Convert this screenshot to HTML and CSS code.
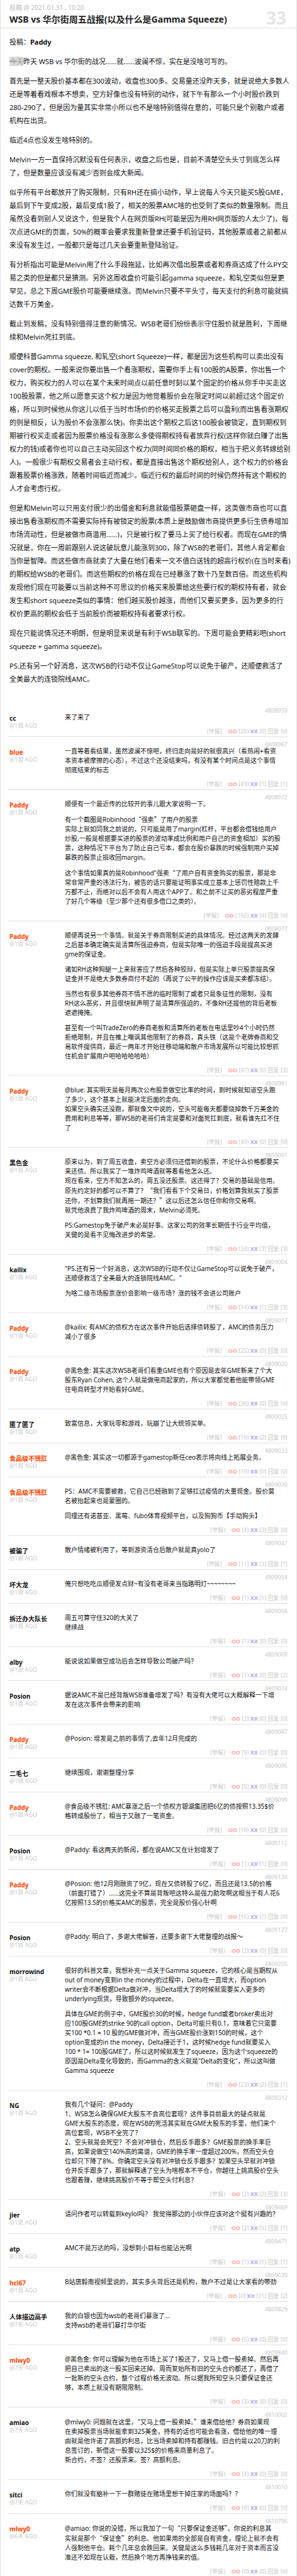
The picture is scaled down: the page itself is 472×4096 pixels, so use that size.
FILE: index.html
```html
<!DOCTYPE html>
<html lang="zh-CN">
<head>
<meta charset="utf-8">
<meta name="viewport" content="width=device-width, initial-scale=1">
<title>WSB vs 华尔街周五战报(以及什么是Gamma Squeeze)</title>
<link rel="stylesheet" href="styles.css">
</head>
<body>
<main class="page">
<header class="post-head">
<div>
<div class="post-meta">投稿 @ 2021.01.31 , 10:20</div>
<h1 class="post-title">WSB vs 华尔街周五战报(以及什么是Gamma Squeeze)</h1>
</div>
<a class="post-count" href="#comments">33</a>
</header>

<article class="post">
<p>投稿：<strong>Paddy</strong></p>
<p><del>今天</del>昨天 WSB vs 华尔街的战况……就……波澜不惊，实在是没啥可写的。</p>
<p>首先是一整天股价基本都在300波动，收盘也300多。交易量还没昨天多，就是说绝大多数人
还是等着看戏根本不想卖，空方好像也没有特别的动作，就下午有那么一个小时股价跌到
280-290了，但是因为量其实非常小所以也不是啥特别值得在意的，可能只是个别散户或者
机构在出货。</p>
<p>临近4点也没发生啥特别的。</p>
<p>Melvin一方一直保持沉默没有任何表示，收盘之后也是，目前不清楚空头头寸到底怎么样
了，但是数量应该没有减少否则会成大新闻。</p>
<p>似乎所有平台都放开了购买限制，只有RH还在搞小动作，早上说每人今天只能买5股GME，
最后到下午变成2股，最后变成1股了，相关的股票AMC啥的也受到了类似的数量限制。而且
虽然没看到别人又说这个，但是我个人在网页版RH(可能是因为用RH网页版的人太少了)，每
次点进GME的页面，50%的概率会要求我重新登录还要手机验证码，其他股票或者之前都从
来没有发生过，一般都只是每过几天会要重新登陆验证。</p>
<p>有分析指出可能是Melvin用了什么手段拖延，比如再次借出股票或者和券商达成了什么PY交
易之类的但是都只是猜测。另外这周收盘价可能引起gamma squeeze，和轧空类似但是更
罕见，总之下周GME股价可能要继续涨。而Melvin只要不平头寸，每天支付的利息可能就搞
达数千万美金。</p>
<p>截止到发稿，没有特别值得注意的新情况。WSB老哥们纷纷表示守住股价就是胜利，下周继
续和Melvin死扛到底。</p>
<p>顺便科普Gamma squeeze, 和轧空(short Squeeze)一样，都是因为这些机构可以卖出没有
cover的期权。一般来说你要出售一个看涨期权，需要你手上有100股的A股票，你出售一个
权力，购买权力的人可以在某个未来时间点以前任意时刻以某个固定的价格从你手中买走这
100股股票，他之所以愿意买这个权力是因为他觉着股价会在限定时间以前超过这个固定价
格，所以到时候他从你这儿以低于当时市场价的价格买走股票之后可以盈利(而出售看涨期权
的则是相反，认为股价不会涨那么快)。你卖出这个期权之后这100股会被锁定，直到期权到
期被行权买走或者因为股票价格没有涨那么多使得期权持有者放弃行权(这样你就白赚了出售
权力的钱)或者你也可以自己主动买回这个权力(同时间同价格的期权，相当于把义务转嫁给别
人)。一般很少有期权交易者会主动行权，都是直接出售这个期权给别人，这个权力的价格会
跟着股票价格涨跌，随着时间临近而减少。临近行权的最后时间的时候仍然持有这个期权的
人才会考虑行权。</p>
<p>但是和Melvin可以只用支付很少的出借金和利息就能借股票砸盘一样，这类做市商也可以直
接出售看涨期权而不需要实际持有被锁定的股票(本质上是鼓励做市商提供更多衍生债券增加
市场流动性，但是被做市商滥用……)，只是被行权了要马上买了给行权者。而现在GME的情
况就是，你在一周前跟别人说这破玩意儿能涨到300，除了WSB的老哥们，其他人肯定都会
当你是智障。而这些做市商就卖了大量在他们看来一文不值白送钱的超高行权价(在当时来看)
的期权给WSB的老哥们。而这些期权的价格在现在已经暴涨了数十乃至数百倍。而这些机构
发现他们现在可能要以当前这种不可思议的价格买来股票给这些要行权的期权持有者，就会
发生和short squeeze类似的事情：他们越买股价越涨，而他们又要买更多，因为更多的行
权价更高的期权会低于当前股价而被期权持有者要求行权。</p>
<p>现在只能说情况还不明朗，但是明显来说是有利于WSB联军的。下周可能会更精彩吧(short
squeeze + gamma squeeze)。</p>
<p>PS.还有另一个好消息，这次WSB的行动不仅让GameStop可以说免于破产，还顺便救活了
全美最大的连锁院线AMC。</p>
</article>

<section class="comments" id="comments">
<article class="comment">
<div class="author"><b class="name">cc</b><span class="ago">@1周 AGO</span></div>
<a class="cid" href="#">4808959</a>
<div class="text"><p>来了来了</p></div>
<div class="acts"><a class="report" href="#">[举报]</a><a class="oo" href="#">OO</a> [28] <a class="xx" href="#">XX</a> [0] <a href="#">回复</a> [0]</div>
</article>

<article class="comment">
<div class="author"><b class="name red">blue</b><span class="ago">@1周 AGO</span></div>
<a class="cid" href="#">4808967</a>
<div class="text"><p>一直等着看结果，虽然波澜不惊吧，终归走向是好的就很高兴（看热闹+看资
本资本被摩擦的心态），不过这个还没结束吗，有没有某个时间点是这个事情
彻底结束的标志</p></div>
<div class="acts"><a class="report" href="#">[举报]</a><a class="oo" href="#">OO</a> [43] <a class="xx" href="#">XX</a> [1] <a href="#">回复</a> [1]</div>
</article>

<article class="comment">
<div class="author"><b class="name red">Paddy</b><span class="ago">@1周 AGO</span></div>
<a class="cid" href="#">4808972</a>
<div class="text"><p>顺便有一个最近传的比较开的事儿跟大家说明一下。</p>
<p>有一个截图是Robinhood<span class="q">“</span>强卖<span class="q">”</span>了用户的股票
实际上就如同我之前说的，只可能是用了margin(杠杆，平台都会借钱给用户
炒股,一般是根据要买进的股票的波动率成比例和用户自己的资金相加）买的股
票，这种情况下平台为了防止自己亏本，都会在股价暴跌的时候强制用户买掉
暴跌的股票止损收回margin。</p>
<p>这个事情如果真的是Robinhood"强卖<span class="q">“</span>了用户自有资金购买的股票，那是非
常非常严重的违法行为，被告的话只要能证明事实成立基本上惩罚性赔款上千
万都不止，而绝对以后不会有人用这个APP了。和之前不让买的恶劣程度严重
了好几个等级（至少那个还有很多借口之类的）。</p></div>
<div class="acts"><a class="report" href="#">[举报]</a><a class="oo" href="#">OO</a> [192] <a class="xx" href="#">XX</a> [4] <a href="#">回复</a> [0]</div>
</article>

<article class="comment">
<div class="author"><b class="name red">Paddy</b><span class="ago">@1周 AGO</span></div>
<a class="cid" href="#">4808977</a>
<div class="text"><p>顺便再说另一个事情。就是关于券商限制买进的具体情况。经过这两天的发酵
之后基本确定确实是清算所强迫券商，但是实际唯一的强迫手段是提高买进
gme的保证金。</p>
<p>诸如RH这种狗腿一上来就答应了然后各种狡辩，但是实际上单只股票提高保
证金并不是绝大多数券商付不起的（再说了公平的操作应该是买卖都冻结）。</p>
<p>当然也有很多其他券商不情不愿的临时限制了或者只是象征性的限制，没有
RH这么恶劣，并且很快就声明了是清算所强迫的，不像RH还提他的背后老板
遮遮掩掩。</p>
<p>甚至有一个叫TradeZero的券商老板和清算所的老板在电话里吵4个小时仍然
拒绝限制，并且在推上嘲讽其他限制了的券商，真头铁（这是个老牌券商和交
易软件提供商，最近一两年才开始往移动端和散户市场发展所以可能比较想抓
住机会扩展用户吧哈哈哈哈哈）</p></div>
<div class="acts"><a class="report" href="#">[举报]</a><a class="oo" href="#">OO</a> [97] <a class="xx" href="#">XX</a> [0] <a href="#">回复</a> [3]</div>
</article>

<article class="comment">
<div class="author"><b class="name red">Paddy</b><span class="ago">@1周 AGO</span></div>
<a class="cid" href="#">4808981</a>
<div class="text"><p>@blue: 其实明天是每月两次公布股票做空比率的时间，到时候就知道空头跑
了多少，这个基本上就能决定后面的走向。
如果空头确实还没跑，那就像文中说的，空头可能每天都要烧掉数千万美金的
费用和利息等等，那WSB的老哥们肯定是要和对面死扛到底，就看谁先扛不住
了</p></div>
<div class="acts"><a class="report" href="#">[举报]</a><a class="oo" href="#">OO</a> [49] <a class="xx" href="#">XX</a> [0] <a href="#">回复</a> [0]</div>
</article>

<article class="comment">
<div class="author"><b class="name">黑色金</b><span class="ago">@1周 AGO</span></div>
<a class="cid" href="#">4809001</a>
<div class="text"><p>原来以为，到了周五收盘，卖空方必须归还借到的股票，不论什么价格都要买
来还债。所以我买了一堆炸鸡啤酒就等着看他怎么还。
现在看来，空方不知怎么的，周五没还股票。这还得了？交易的基础是信用。
原先约定好的都可以不算了？<span class="q">“</span>我们看看下个交易日，价格划算我就买了股票
还你，不划算我们就再拖一期还？<span class="q">”</span>这以后还怎么信任你和你交易啊。
就凭他浪费了我炸鸡啤酒的周末，Melvin必须死。</p>
<p>PS:Gamestop免于破产未必是好事。这家公司的效率长期低于行业平均值，
关键的是看不见悔改进步的希望。</p></div>
<div class="acts"><a class="report" href="#">[举报]</a><a class="oo" href="#">OO</a> [34] <a class="xx" href="#">XX</a> [3] <a href="#">回复</a> [3]</div>
</article>

<article class="comment">
<div class="author"><b class="name">kailix</b><span class="ago">@1周 AGO</span></div>
<a class="cid" href="#">4809004</a>
<div class="text"><p>"PS.还有另一个好消息，这次WSB的行动不仅让GameStop可以说免于破产，
还顺便救活了全美最大的连锁院线AMC。"</p>
<p>为啥二级市场股票涨价会影响一级市场？涨的钱不会进公司账户</p></div>
<div class="acts"><a class="report" href="#">[举报]</a><a class="oo" href="#">OO</a> [14] <a class="xx" href="#">XX</a> [1] <a href="#">回复</a> [3]</div>
</article>

<article class="comment">
<div class="author"><b class="name red">Paddy</b><span class="ago">@1周 AGO</span></div>
<a class="cid" href="#">4809017</a>
<div class="text"><p>@kailix: 有AMC的债权方在这次事件开始后选择债转股了，AMC的债务压力
减小了很多</p></div>
<div class="acts"><a class="report" href="#">[举报]</a><a class="oo" href="#">OO</a> [25] <a class="xx" href="#">XX</a> [0] <a href="#">回复</a> [0]</div>
</article>

<article class="comment">
<div class="author"><b class="name red">Paddy</b><span class="ago">@1周 AGO</span></div>
<a class="cid" href="#">4809020</a>
<div class="text"><p>@黑色金: 其实这次WSB老哥们看重GME也有个原因是去年GME新来了个大
股东Ryan Cohen, 这个人就是做电商起家的，所以大家都觉着他能带领GME
往电商转型才开始看好GME。</p></div>
<div class="acts"><a class="report" href="#">[举报]</a><a class="oo" href="#">OO</a> [30] <a class="xx" href="#">XX</a> [0] <a href="#">回复</a> [0]</div>
</article>

<article class="comment">
<div class="author"><b class="name">匿了匿了</b><span class="ago">@1周 AGO</span></div>
<a class="cid" href="#">4809025</a>
<div class="text"><p>致富信息，大家玩零和游戏，玩崩了让大统领买单。</p></div>
<div class="acts"><a class="report" href="#">[举报]</a><a class="oo" href="#">OO</a> [19] <a class="xx" href="#">XX</a> [2] <a href="#">回复</a> [0]</div>
</article>

<article class="comment">
<div class="author"><b class="name red">食品级不锈肛</b><span class="ago">@1周 AGO</span></div>
<a class="cid" href="#">4809033</a>
<div class="text"><p>@黑色金: 其实这一切都源于gamestop新任ceo表示将向线上拓展业务。</p></div>
<div class="acts"><a class="report" href="#">[举报]</a><a class="oo" href="#">OO</a> [19] <a class="xx" href="#">XX</a> [0] <a href="#">回复</a> [0]</div>
</article>

<article class="comment">
<div class="author"><b class="name red">食品级不锈肛</b><span class="ago">@1周 AGO</span></div>
<a class="cid" href="#">4809039</a>
<div class="text"><p>PS：AMC不需要被救，它自己已经融到了足够扛过疫情的大量现金。股价莫
名被抬起来也是蒙圈的。</p>
<p>同理还有诺基亚、黑莓、fubo体育视频平台，以及狗狗币【手动狗头】</p></div>
<div class="acts"><a class="report" href="#">[举报]</a><a class="oo" href="#">OO</a> [4] <a class="xx" href="#">XX</a> [3] <a href="#">回复</a> [0]</div>
</article>

<article class="comment">
<div class="author"><b class="name">被骗了</b><span class="ago">@1周 AGO</span></div>
<a class="cid" href="#">4809047</a>
<div class="text"><p>散户情绪被利用了，等到游资清仓后散户就是真yolo了</p></div>
<div class="acts"><a class="report" href="#">[举报]</a><a class="oo" href="#">OO</a> [11] <a class="xx" href="#">XX</a> [3] <a href="#">回复</a> [1]</div>
</article>

<article class="comment">
<div class="author"><b class="name">坏大龙</b><span class="ago">@1周 AGO</span></div>
<a class="cid" href="#">4809054</a>
<div class="text"><p>俺只想吃吃瓜顺便发点财~有没有老哥来当指路明灯~~~~~~~~</p></div>
<div class="acts"><a class="report" href="#">[举报]</a><a class="oo" href="#">OO</a> [1] <a class="xx" href="#">XX</a> [1] <a href="#">回复</a> [0]</div>
</article>

<article class="comment">
<div class="author"><b class="name">拆迁办大队长</b><span class="ago">@1周 AGO</span></div>
<a class="cid" href="#">4809066</a>
<div class="text"><p>周五可算守住320的大关了
继续战</p></div>
<div class="acts"><a class="report" href="#">[举报]</a><a class="oo" href="#">OO</a> [1] <a class="xx" href="#">XX</a> [0] <a href="#">回复</a> [0]</div>
</article>

<article class="comment">
<div class="author"><b class="name">alby</b><span class="ago">@1周 AGO</span></div>
<a class="cid" href="#">4809069</a>
<div class="text"><p>能说说如果做空成功后会怎样导致公司破产吗？</p></div>
<div class="acts"><a class="report" href="#">[举报]</a><a class="oo" href="#">OO</a> [1] <a class="xx" href="#">XX</a> [0] <a href="#">回复</a> [2]</div>
</article>

<article class="comment">
<div class="author"><b class="name">Posion</b><span class="ago">@1周 AGO</span></div>
<a class="cid" href="#">4809074</a>
<div class="text"><p>据说AMC不是已经背叛WSB准备增发了吗？有没有大佬可以大概解释一下增
发在这次事件会带来的影响</p></div>
<div class="acts"><a class="report" href="#">[举报]</a><a class="oo" href="#">OO</a> [2] <a class="xx" href="#">XX</a> [0] <a href="#">回复</a> [0]</div>
</article>

<article class="comment">
<div class="author"><b class="name red">Paddy</b><span class="ago">@1周 AGO</span></div>
<a class="cid" href="#">4809087</a>
<div class="text"><p>@Posion: 增发是之前的事情了,去年12月完成的</p></div>
<div class="acts"><a class="report" href="#">[举报]</a><a class="oo" href="#">OO</a> [9] <a class="xx" href="#">XX</a> [0] <a href="#">回复</a> [0]</div>
</article>

<article class="comment">
<div class="author"><b class="name">二毛七</b><span class="ago">@1周 AGO</span></div>
<a class="cid" href="#">4809096</a>
<div class="text"><p>继续围观，谢谢整理分享</p></div>
<div class="acts"><a class="report" href="#">[举报]</a><a class="oo" href="#">OO</a> [5] <a class="xx" href="#">XX</a> [0] <a href="#">回复</a> [0]</div>
</article>

<article class="comment">
<div class="author"><b class="name red">Paddy</b><span class="ago">@1周 AGO</span></div>
<a class="cid" href="#">4809099</a>
<div class="text"><p>@食品级不锈肛: AMC暴涨之后一个债权方银湖集团把6亿的债按照13.35$价
格转成股份了，相当于又融了一笔资金。</p></div>
<div class="acts"><a class="report" href="#">[举报]</a><a class="oo" href="#">OO</a> [19] <a class="xx" href="#">XX</a> [0] <a href="#">回复</a> [0]</div>
</article>

<article class="comment">
<div class="author"><b class="name">Posion</b><span class="ago">@1周 AGO</span></div>
<a class="cid" href="#">4809112</a>
<div class="text"><p>@Paddy: 看这两天的新闻，都在说AMC又在计划增发了</p></div>
<div class="acts"><a class="report" href="#">[举报]</a><a class="oo" href="#">OO</a> [1] <a class="xx" href="#">XX</a> [1] <a href="#">回复</a> [0]</div>
</article>

<article class="comment">
<div class="author"><b class="name red">Paddy</b><span class="ago">@1周 AGO</span></div>
<a class="cid" href="#">4809134</a>
<div class="text"><p>@Posion: 他12月刚融资了9亿，现在又债转股了6亿，而且还是13.5的价格
（前面打错了）……这完全不算是背叛吧这特么是强力助攻啊这相当于有人花6
亿按照13.5的价格买AMC的股票，完全是股价强心针啊</p></div>
<div class="acts"><a class="report" href="#">[举报]</a><a class="oo" href="#">OO</a> [15] <a class="xx" href="#">XX</a> [1] <a href="#">回复</a> [0]</div>
</article>

<article class="comment">
<div class="author"><b class="name">Posion</b><span class="ago">@1周 AGO</span></div>
<a class="cid" href="#">4809177</a>
<div class="text"><p>@Paddy: 明白了，多谢大佬解答，还要多谢下大佬整理的战报～</p></div>
<div class="acts"><a class="report" href="#">[举报]</a><a class="oo" href="#">OO</a> [3] <a class="xx" href="#">XX</a> [0] <a href="#">回复</a> [0]</div>
</article>

<article class="comment">
<div class="author"><b class="name">morrowind</b><span class="ago">@1周 AGO</span></div>
<a class="cid" href="#">4809205</a>
<div class="text"><p>很好的科普文章，我想补充一点关于Gamma squeeze，它的核心是当期权从
out of money变到in the money的过程中，Delta在一直增大，而option
writer会不断根据Delta做对冲，当Delta增大了的时候就需要买入更多的
underlying现货，导致额外的squeeze。</p>
<p>具体在GME的例子中，GME股价30的时候，hedge fund或者broker卖出对
应100股GME的strike 90的call option，Delta可能只有0.1，意味着它只需要
买100 *0.1 = 10 股的GME做对冲，而当GME股价涨到150的时候，这个
option变成的in the money，Delta接近于1，这时候hedge fund就要买入
100 * 1= 100股GME了，所以这时候就发生了squeeze，因为这个squeeze的
原因是Delta变化导致的，而Gamma的含义就是"Delta的变化"，所以这叫做
Gamma squeeze</p></div>
<div class="acts"><a class="report" href="#">[举报]</a><a class="oo" href="#">OO</a> [23] <a class="xx" href="#">XX</a> [2] <a href="#">回复</a> [1]</div>
</article>

<article class="comment">
<div class="author"><b class="name">NG</b><span class="ago">@1周 AGO</span></div>
<a class="cid" href="#">4809312</a>
<div class="text"><p>我有几个疑问：@Paddy
1、WSB怎么确保GME大股东不会高位套现？这件事目前最大的疑点就是
GME大股东的态度，现在WSB的死活其实就在GME大股东的手里，他们来个
高位套现，WSB不全完了？
2、空头就是会死空？不会对冲锁仓，然后反手跟多？GME股票的换手率巨
高，如果说做空140%高的离谱，GME的换手率一度超过200%，然而空头仓
位却只下降了8%。你确定空头没有对冲锁仓反手跟多？如果空头早就对冲锁
仓并反手跟多了，那就解释通了空头为啥根本不平仓，你越往上挑高股价空头
也跟着赚，继续挑高股价不等于帮空头付利息？</p></div>
<div class="acts"><a class="report" href="#">[举报]</a><a class="oo" href="#">OO</a> [3] <a class="xx" href="#">XX</a> [2] <a href="#">回复</a> [3]</div>
</article>

<article class="comment">
<div class="author"><b class="name">jier</b><span class="ago">@1周 AGO</span></div>
<a class="cid" href="#">4809469</a>
<div class="text"><p>请问作者可以转载到keylol吗？ 我觉得那边的小伙伴应该对这个挺有兴趣的？</p></div>
<div class="acts"><a class="report" href="#">[举报]</a><a class="oo" href="#">OO</a> [2] <a class="xx" href="#">XX</a> [5] <a href="#">回复</a> [1]</div>
</article>

<article class="comment">
<div class="author"><b class="name">atp</b><span class="ago">@1周 AGO</span></div>
<a class="cid" href="#">4809471</a>
<div class="text"><p>AMC不是万达的吗，没想到小目标也能沾光啊</p></div>
<div class="acts"><a class="report" href="#">[举报]</a><a class="oo" href="#">OO</a> [1] <a class="xx" href="#">XX</a> [1] <a href="#">回复</a> [1]</div>
</article>

<article class="comment">
<div class="author"><b class="name red">hcl67</b><span class="ago">@1周 AGO</span></div>
<a class="cid" href="#">4809639</a>
<div class="text"><p>B站唐毅南视频里说的，其实多头背后还是机构，散户不过是让大家看的带劲</p></div>
<div class="acts"><a class="report" href="#">[举报]</a><a class="oo" href="#">OO</a> [0] <a class="xx" href="#">XX</a> [21] <a href="#">回复</a> [2]</div>
</article>

<article class="comment">
<div class="author"><b class="name">人体描边高手</b><span class="ago">@7天 AGO</span></div>
<a class="cid" href="#">4809829</a>
<div class="text"><p>我的白银也因为wsb的老哥们暴涨了…
支持wsb的老哥们暴打华尔街</p></div>
<div class="acts"><a class="report" href="#">[举报]</a><a class="oo" href="#">OO</a> [5] <a class="xx" href="#">XX</a> [0] <a href="#">回复</a> [0]</div>
</article>

<article class="comment">
<div class="author"><b class="name red">mlwy0</b><span class="ago">@7天 AGO</span></div>
<a class="cid" href="#">4809840</a>
<div class="text"><p>@黑色金: 你可以理解为他在市场上买了1股还了，又马上借一股卖掉。然后再
把自己卖出的这一股买回来还掉。周而复始所有旧的空头合约都还了，再借了
一批新的空头合约，整个过程价格无波动。所以据我所知空头只要保证金还
够，本质上就没有期限限制。</p></div>
<div class="acts"><a class="report" href="#">[举报]</a><a class="oo" href="#">OO</a> [3] <a class="xx" href="#">XX</a> [0] <a href="#">回复</a> [0]</div>
</article>

<article class="comment">
<div class="author"><b class="name">amiao</b><span class="ago">@7天 AGO</span></div>
<a class="cid" href="#">4810002</a>
<div class="text"><p>@mlwy0: 问题就在这里，<span class="q">“</span>又马上借一股卖掉。<span class="q">”</span>谁来借给他？券商如果现
在卖掉股票当场就能拿到325美金，持有的话也可能会看涨，借给他的唯一理
由就是他许诺了高额的利息，比当场卖掉和持有都赚钱。旧合约是以20刀的利
息签订的，新借这一股要以325$的价格来商量利息了。
新合约，不签？还股票来。签？高额利息。</p></div>
<div class="acts"><a class="report" href="#">[举报]</a><a class="oo" href="#">OO</a> [4] <a class="xx" href="#">XX</a> [0] <a href="#">回复</a> [0]</div>
</article>

<article class="comment">
<div class="author"><b class="name">sitci</b><span class="ago">@7天 AGO</span></div>
<a class="cid" href="#">4810010</a>
<div class="text"><p>你们就没有脑补一下一群赌徒在赌场里想干掉庄家的场面吗？？</p></div>
<div class="acts"><a class="report" href="#">[举报]</a><a class="oo" href="#">OO</a> [0] <a class="xx" href="#">XX</a> [0] <a href="#">回复</a> [0]</div>
</article>

<article class="comment">
<div class="author"><b class="name red">mlwy0</b><span class="ago">@6天 AGO</span></div>
<a class="cid" href="#">4810796</a>
<div class="text"><p>@amiao: 你说的没错，所以我加了一句<span class="q">“</span>只要保证金还够<span class="q">”</span>。你说的利息其
实就是那个<span class="q">“</span>保证金<span class="q">”</span>的利息。他如果用的全部是自有资金，理论上就不会有
人强制他平仓。耗个几年总会跌回来。关键是这么多钱耗几年对于资本而言没
准还不如现在认栽，然后换个地方再挣钱来的值。</p></div>
<div class="acts"><a class="report" href="#">[举报]</a><a class="oo" href="#">OO</a> [0] <a class="xx" href="#">XX</a> [0] <a href="#">回复</a> [0]</div>
</article>
</section>
</main>
</body>
</html>
```
FILE: styles.css
```css
* {
  box-sizing: border-box;
}

body {
  margin: 0;
  background: #fff;
  color: #111;
  font-family: "Noto Sans", "Noto Sans CJK SC", sans-serif;
  font-size: 10px;
}

p {
  margin: 0;
  white-space: pre-line;
}

a {
  color: inherit;
  text-decoration: none;
}

.page {
  min-height: 100vh;
  border: solid #e2e2e2;
  border-width: 0 1px;
}

.post-head {
  display: flex;
  justify-content: space-between;
  align-items: flex-end;
  padding: 5px 16px 2px 14px;
  border-bottom: 1px solid #e2e2e2;
}

.post-meta {
  color: #bbb;
  line-height: 15px;
}

.post-title {
  margin: 0;
  color: #222;
  font-size: 14px;
  line-height: 22px;
}

.post-count {
  color: #e5e5e5;
  font-size: 28px;
  font-weight: 700;
  line-height: 28px;
}

.post {
  display: flex;
  flex-direction: column;
  gap: 10px;
  padding: 11px 4px 0 14px;
  font-size: 11px;
  line-height: 21px;
}

.post del {
  background: #ddd;
  color: #999;
}

.comments {
  padding: 28px 14px 0 11px;
}

.comment {
  display: grid;
  grid-template-columns: 88px 1fr;
  padding: 9px 0 3px 3px;
  border-bottom: 1px solid #e2e2e2;
}

.comment:last-child {
  border-bottom: 0;
}

.author {
  grid-row: 1 / 4;
  display: flex;
  flex-direction: column;
  padding-top: 9px;
  line-height: 12px;
}

.name.red {
  color: #ff4500;
}

.ago,
.cid,
.acts {
  color: #c8c8c8;
  font-size: 9px;
}

.cid {
  justify-self: end;
  line-height: 6px;
}

.text {
  display: flex;
  flex-direction: column;
  gap: 9px;
  line-height: 15px;
}

.q {
  font-family: "Noto Sans CJK SC", sans-serif;
}

.acts {
  margin-top: 10px;
  line-height: 10px;
  text-align: right;
}

.report {
  margin-right: 10px;
}

.oo {
  color: #faa;
  font-weight: 700;
}

.xx {
  color: #aaf;
  font-weight: 700;
}
```
